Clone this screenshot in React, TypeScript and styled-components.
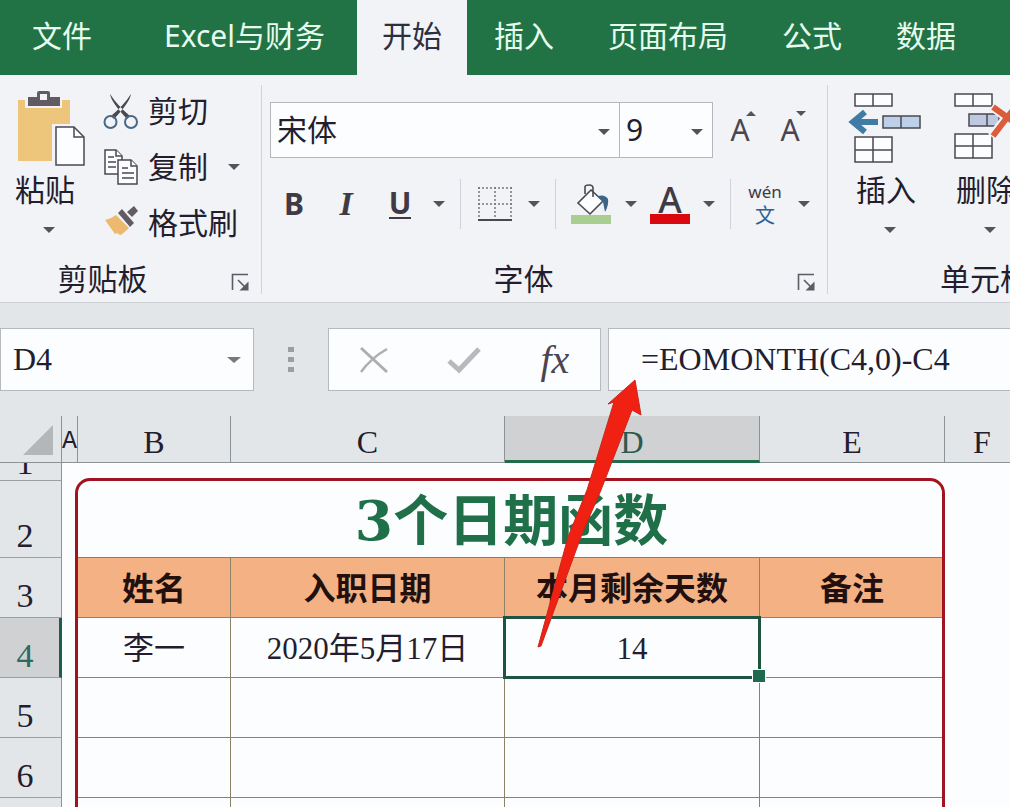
import React from "react";
import styled, { createGlobalStyle, css } from "styled-components";

const ui = `"Noto Sans", "Noto Sans CJK SC", sans-serif`;
const sheet = `"Liberation Serif", "Noto Sans CJK SC", serif`;

const GlobalStyle = createGlobalStyle`
  * { box-sizing: border-box; }
  body { margin: 0; background: #fcfdfe; overflow: hidden; }
  button, input, select { font: inherit; color: inherit; border: 0; padding: 0; margin: 0; background: none; }
`;

const Shell = styled.div`
  height: 100vh;
  display: flex;
  flex-direction: column;
  overflow: hidden;
  font-family: ${ui};
  font-size: 30px;
  line-height: 40px;
  color: #231d2e;
`;

const TabBar = styled.nav`
  flex: none;
  height: 75px;
  display: flex;
  overflow: hidden;
  background: #217345;
`;

const Tab = styled.button<{ $active?: boolean; $pad?: number; $gap?: number }>`
  flex: none;
  height: 75px;
  padding: 0 ${(p) => p.$pad ?? 27}px 4px;
  margin-right: ${(p) => p.$gap ?? 0}px;
  white-space: nowrap;
  color: #e6fbee;
  ${(p) => p.$active && css`background: #f1f3f6; color: #2a3040;`}
`;

const Ribbon = styled.section`
  flex: none;
  height: 228px;
  display: flex;
  overflow: hidden;
  background: #f1f3f6;
  border-bottom: 1px solid #cdd1d5;
`;

const Group = styled.div<{ $w?: number }>`
  flex: none;
  width: ${(p) => p.$w}px;
  padding: 15px 0 0 8px;
  display: flex;
  flex-direction: column;
`;

const GroupLine = styled.div`
  flex: none;
  width: 1px;
  margin: 10px 0 8px;
  background: #cfd3d8;
`;

const GroupBody = styled.div`
  height: 169px;
  display: flex;
`;

const GroupFooter = styled.div<{ $inset?: number }>`
  display: flex;
  align-items: center;
  justify-content: center;
  position: relative;
  height: 40px;
  padding-right: ${(p) => p.$inset ?? 0}px;
`;

const Launcher = styled.button`
  position: absolute;
  right: 10px;
  top: 14px;
  width: 20px;
  height: 20px;
  display: flex;
`;

const BigButton = styled.button<{ $w: number }>`
  flex: none;
  width: ${(p) => p.$w}px;
  height: 160px;
  display: flex;
  flex-direction: column;
  align-items: center;
  white-space: nowrap;
`;

const BigIcon = styled.span`
  height: 80px;
  display: flex;
`;

const CaretSlot = styled.span`
  height: 40px;
  padding-left: 8px;
  display: flex;
  align-items: center;
`;

const CommandList = styled.div`
  padding: 1px 0 0 21px;
  display: flex;
  flex-direction: column;
`;

const CommandRow = styled.div`
  height: 56px;
  display: flex;
  align-items: flex-start;
  gap: 13px;
`;

const Command = styled.button`
  display: flex;
  align-items: center;
  gap: 9px;
  height: 40px;
  white-space: nowrap;
`;

const CaretButton = styled.button`
  flex: none;
  width: 26px;
  height: 40px;
  display: flex;
  align-items: center;
  justify-content: center;
`;

const FontStack = styled.div`
  padding-top: 12px;
  display: flex;
  flex-direction: column;
`;

const FontRow = styled.div`
  height: 56px;
  display: flex;
  align-items: center;
`;

const SelectBox = styled.div<{ $w: number }>`
  position: relative;
  width: ${(p) => p.$w}px;
  height: 56px;
  margin-right: -1px;
  border: 1px solid #b4b8bc;
  background: #fcfdfe;
  display: flex;
  align-items: center;
  select {
    appearance: none;
    width: 100%;
    height: 54px;
    padding: 0 30px 0 6px;
    outline: none;
  }
  svg { position: absolute; right: 9px; top: 26px; pointer-events: none; }
`;

const SizeButton = styled.button`
  width: 50px;
  height: 50px;
  display: flex;
  align-items: center;
  justify-content: center;
  color: #4a4550;
  svg { align-self: flex-start; margin: 6px 0 0 -4px; }
`;

const SizeButtons = styled.div`
  display: flex;
  margin-left: 6px;
`;

const FormatRow = styled.div`
  height: 60px;
  margin-top: 16px;
  display: flex;
  align-items: center;
`;

const FormatButton = styled.button<{ $w?: number }>`
  flex: none;
  width: ${(p) => p.$w ?? 52}px;
  height: 52px;
  display: flex;
  flex-direction: column;
  align-items: center;
  justify-content: center;
  font-weight: 700;
  color: #403a44;
`;

const Italic = styled.i`
  font-family: "Liberation Serif", serif;
  font-size: 34px;
`;

const Underlined = styled.span`
  line-height: 28px;
  border-bottom: 2px solid #403a44;
`;

const FontColor = styled.span`
  height: 39px;
  width: 40px;
  line-height: 29px;
  font-size: 36px;
  font-weight: 500;
  border-bottom: 10px solid #d9090f;
`;

const Pinyin = styled.span`
  font-size: 17px;
  line-height: 24px;
  font-weight: 400;
`;

const PinyinChar = styled.span`
  height: 24px;
  font-size: 20px;
  line-height: 24px;
  font-weight: 400;
  color: #2f5f94;
`;

const Divider = styled.span`
  flex: none;
  width: 1px;
  height: 50px;
  margin: 0 8px;
  background: #cfd2d8;
`;

const FormulaBar = styled.section`
  flex: none;
  height: 113px;
  padding-top: 25px;
  display: flex;
  align-items: flex-start;
  background: #e3e6e9;
  font-family: ${sheet};
  font-size: 32px;
`;

const NameBox = styled.div`
  flex: none;
  width: 254px;
  height: 63px;
  padding: 0 6px 0 12px;
  display: flex;
  align-items: center;
  background: #fcfdfe;
  border: 1px solid #b6babe;
  input { flex: 1; min-width: 0; height: 50px; outline: none; }
`;

const Grip = styled.div`
  flex: none;
  width: 74px;
  height: 63px;
  display: flex;
  align-items: center;
  justify-content: center;
`;

const EntryTools = styled.div`
  flex: none;
  width: 273px;
  height: 63px;
  margin-right: 7px;
  display: flex;
  background: #fcfdfe;
  border: 1px solid #b6babe;
  button {
    flex: 1;
    display: flex;
    align-items: center;
    justify-content: center;
  }
`;

const Fx = styled.i`
  font-size: 40px;
  color: #4a4550;
`;

const FormulaInput = styled.input`
  && {
    flex: 1;
    min-width: 0;
    height: 63px;
    padding: 0 0 0 32px;
    background: #fcfdfe;
    border: 1px solid #b6babe;
    border-right: 0;
    outline: none;
  }
`;

const SheetArea = styled.main`
  flex: 1;
  min-height: 0;
  position: relative;
  overflow: hidden;
  background: #fcfdfe;
  font-family: ${sheet};
`;

const Grid = styled.table`
  width: 100%;
  table-layout: fixed;
  border-collapse: separate;
  border-spacing: 0;
  font-size: 31px;
  line-height: 36px;
`;

const ColHead = styled.th<{ $selected?: boolean; $narrow?: boolean }>`
  height: 47px;
  padding: 6px 0 0;
  font-weight: 400;
  font-size: 32px;
  background: #e3e6e9;
  border-right: 1px solid #8d9296;
  border-bottom: 1px solid #8d9296;
  &:last-child { border-right: 0; text-align: left; padding-left: 28px; }
  ${(p) => p.$narrow && css`
    font-family: "Liberation Mono", monospace;
    font-size: 25px;
  `}
  ${(p) => p.$selected && css`
    padding-top: 8px;
    background: #cfd1d3;
    color: #2d5a4a;
    border-bottom: 3px solid #1f6b4a;
  `}
`;

const Corner = styled.td`
  padding: 8px 8px 6px 0;
  background: #e3e6e9;
  border-right: 1px solid #8d9296;
  border-bottom: 1px solid #8d9296;
  svg { display: block; margin-left: auto; }
`;

const Row = styled.tr<{ $h: number }>`
  height: ${(p) => p.$h}px;
`;

const RowHead = styled.th<{ $selected?: boolean }>`
  padding: 0 11px 3px 0;
  vertical-align: bottom;
  font-weight: 400;
  font-size: 34px;
  background: #e3e6e9;
  border-right: 1px solid #8d9296;
  border-bottom: 1px solid #9a9fa3;
  ${(p) => p.$selected && css`
    padding-right: 9px;
    background: #cfd1d3;
    color: #2d6a62;
    border-right: 3px solid #1f5f48;
  `}
`;

const ClippedNumber = styled.div`
  height: 14px;
  overflow: hidden;
  display: flex;
  align-items: flex-end;
  justify-content: center;
  line-height: 28px;
`;

const Cell = styled.td`
  padding: 2px 0 0;
  text-align: center;
  border-right: 1px solid #8b8468;
  border-bottom: 1px solid #8b8468;
`;

const Blank = styled.td`
  padding: 0;
`;

const Title = styled.td`
  padding: 4px 0 0;
  text-align: center;
  font-family: "DejaVu Serif", "Noto Sans CJK SC", serif;
  font-size: 55px;
  line-height: 60px;
  font-weight: 700;
  color: #1f7048;
  border-bottom: 1px solid #8b8440;
`;

const HeadCell = styled(Cell)`
  background: #f4b183;
  font-size: 32px;
  font-weight: 700;
  color: #22100f;
`;

const SelectedCell = styled(Cell)`
  position: relative;
`;

const Selection = styled.span`
  position: absolute;
  inset: -2px;
  border: 3px solid #1f5540;
  &::after {
    content: "";
    position: absolute;
    right: -8px;
    bottom: -7px;
    width: 12px;
    height: 12px;
    background: #1d6a4c;
    border: 1px solid #fcfdfe;
  }
`;

const RedFrame = styled.div`
  position: absolute;
  left: 75px;
  top: 62px;
  width: 870px;
  height: 400px;
  border: 3px solid #a3131f;
  border-radius: 15px;
  pointer-events: none;
`;

const Pointer = styled.svg`
  position: absolute;
  left: 530px;
  top: 372px;
  pointer-events: none;
`;

const Caret = ({ w = 12, color = "#55535a" }: { w?: number; color?: string }) => (
  <svg width={w} height="6" viewBox="0 0 12 6" preserveAspectRatio="none" aria-hidden>
    <path d="M0 0H12L6 6Z" fill={color} />
  </svg>
);

const LaunchIcon = () => (
  <svg width="20" height="20" viewBox="0 0 20 20" fill="none" stroke="#5c5a62" strokeWidth="1.6">
    <path d="M1.5 17V1.5H17M7 7L14 14" />
    <path d="M17.5 8.5V17.5H8.5Z" fill="#5c5a62" stroke="none" />
  </svg>
);

const PasteIcon = () => (
  <svg width="82" height="78" viewBox="-12 0 82 78">
    <path d="M2 10H54V38H38V71H2Z" fill="#edc57b" />
    <path d="M9 6H46V18H9Z" fill="#f1f3f6" />
    <path d="M12 7H21V3Q21 1 23 1H32Q34 1 34 3V7H44V16H12ZM24 4V10H31V4Z" fill="#625b62" fillRule="evenodd" />
    <path d="M36 34H61L70 46V78H36Z" fill="#f1f3f6" />
    <path d="M40 37H58L68 47V75H40Z" fill="#fcfdfe" stroke="#4b4850" strokeWidth="1.5" />
    <path d="M58 37V47H68" fill="none" stroke="#4b4850" strokeWidth="1.5" />
  </svg>
);

const CutIcon = () => (
  <svg width="36" height="38" viewBox="0 0 36 38" fill="none">
    <path d="M7 2Q8 10 24 27L27 24Q14 13 7 2ZM28 2Q27 10 11 27L8 24Q21 13 28 2Z" fill="#4b4850" />
    <circle cx="7.5" cy="30" r="6" stroke="#4a6785" strokeWidth="2" />
    <circle cx="28" cy="30" r="6" stroke="#4a6785" strokeWidth="2" />
  </svg>
);

const CopyIcon = () => (
  <svg width="36" height="38" viewBox="0 0 36 38" fill="#fcfdfe" stroke="#4b4850" strokeWidth="1.5">
    <path d="M2 2H13L19 8V26H2Z" />
    <path d="M13 2V8H19M5 9H11M5 14H13M5 19H13" />
    <path d="M15 12H28L34 18V36H15Z" />
    <path d="M28 12V18H34M19 20H25M19 25H31M19 30H31" />
  </svg>
);

const BrushIcon = () => (
  <svg width="36" height="38" viewBox="0 0 36 38">
    <path d="M2 16Q8 15 13 11L26 24Q23 27 18 31Q16 31 14 29L12 30L2 16Z" fill="#edb96e" />
    <path d="M15 9L19 5L31 19L27 23Z" fill="#625b62" />
    <path d="M24 8L31 2L35 7L29 13Z" fill="#625b62" />
  </svg>
);

const BordersIcon = () => (
  <svg width="36" height="36" viewBox="0 0 36 36" fill="none">
    <path d="M1 2H35M1 18H35M2 1V33M18 1V33M34 1V33" stroke="#75757c" strokeWidth="1.5" strokeDasharray="2 2" />
    <path d="M1 34H35" stroke="#4b4850" strokeWidth="2" />
  </svg>
);

const FillIcon = () => (
  <svg width="40" height="40" viewBox="0 0 40 40" fill="none">
    <path d="M20 6L32 17L19 30L7 19Z" fill="#fcfdfe" stroke="#4b4850" strokeWidth="1.6" />
    <path d="M14 10V3Q14 1 18 1Q22 1 22 4V13" stroke="#4b4850" strokeWidth="1.6" />
    <path d="M27 12Q34 10 37 15Q38 21 34 28L32 18Z" fill="#3b6688" />
    <path d="M0 31H40V40H0Z" fill="#a9cf90" />
  </svg>
);

const InsertIcon = () => (
  <svg width="76" height="74" viewBox="0 0 76 74" fill="#fcfdfe" stroke="#4b4850" strokeWidth="1.5">
    <path d="M7 4H44V16H7ZM25 4V16M7 47H44V72H7ZM25 47V72M7 60H44" />
    <path d="M35 26H72V38H35ZM53 26V38" fill="#bdd0e8" />
    <path d="M30 32H6M17 22L5 32L17 42" fill="none" stroke="#3f7ba3" strokeWidth="6" />
  </svg>
);

const DeleteIcon = () => (
  <svg width="76" height="74" viewBox="0 0 76 74" fill="#fcfdfe" stroke="#4b4850" strokeWidth="1.5">
    <path d="M7 4H44V16H7ZM25 4V16M7 44H44V68H7ZM25 44V68M7 56H44" />
    <path d="M21 24H51V36H21ZM39 24V36" fill="#bdc9e0" />
    <path d="M44 16L74 38M44 47L68 16" fill="none" stroke="#f1f3f6" strokeWidth="10" />
    <path d="M45 17L74 38M45 46L68 16" fill="none" stroke="#dc5b3a" strokeWidth="6" />
  </svg>
);

const emptyRows = [5, 6, 7];

export default function App() {
  return (
    <Shell>
      <GlobalStyle />
      <TabBar>
        <Tab $pad={32} $gap={8}>文件</Tab>
        <Tab $pad={32}>Excel与财务</Tab>
        <Tab $active $pad={25}>开始</Tab>
        <Tab>插入</Tab>
        <Tab>页面布局</Tab>
        <Tab>公式</Tab>
        <Tab>数据</Tab>
      </TabBar>

      <Ribbon>
        <Group $w={261}>
          <GroupBody>
            <BigButton $w={74}>
              <BigIcon><PasteIcon /></BigIcon>
              <span>粘贴</span>
              <CaretSlot><Caret /></CaretSlot>
            </BigButton>
            <CommandList>
              <CommandRow><Command><CutIcon />剪切</Command></CommandRow>
              <CommandRow>
                <Command><CopyIcon />复制</Command>
                <CaretButton aria-label="复制选项"><Caret /></CaretButton>
              </CommandRow>
              <CommandRow><Command><BrushIcon />格式刷</Command></CommandRow>
            </CommandList>
          </GroupBody>
          <GroupFooter $inset={64}>
            剪贴板
            <Launcher aria-label="剪贴板设置"><LaunchIcon /></Launcher>
          </GroupFooter>
        </Group>
        <GroupLine />
        <Group $w={565}>
          <GroupBody>
            <FontStack>
              <FontRow>
                <SelectBox $w={350}>
                  <select aria-label="字体名称"><option>宋体</option></select>
                  <Caret />
                </SelectBox>
                <SelectBox $w={94}>
                  <select aria-label="字号"><option>9</option></select>
                  <Caret />
                </SelectBox>
                <SizeButtons>
                  <SizeButton aria-label="增大字号">
                    A<svg width="10" height="5" viewBox="0 0 10 5"><path d="M0 5L5 0L10 5Z" fill="#55535a" /></svg>
                  </SizeButton>
                  <SizeButton aria-label="减小字号">
                    A<svg width="10" height="5" viewBox="0 0 10 5"><path d="M0 0L5 5L10 0Z" fill="#55535a" /></svg>
                  </SizeButton>
                </SizeButtons>
              </FontRow>
              <FormatRow>
                <FormatButton $w={48}>B</FormatButton>
                <FormatButton $w={56}><Italic>I</Italic></FormatButton>
                <FormatButton><Underlined>U</Underlined></FormatButton>
                <CaretButton aria-label="下划线选项"><Caret /></CaretButton>
                <Divider />
                <FormatButton aria-label="边框"><BordersIcon /></FormatButton>
                <CaretButton aria-label="边框选项"><Caret /></CaretButton>
                <Divider />
                <FormatButton $w={54} aria-label="填充颜色"><FillIcon /></FormatButton>
                <CaretButton aria-label="填充选项"><Caret /></CaretButton>
                <FormatButton><FontColor>A</FontColor></FormatButton>
                <CaretButton aria-label="字体颜色选项"><Caret /></CaretButton>
                <Divider />
                <FormatButton><Pinyin>wén</Pinyin><PinyinChar>文</PinyinChar></FormatButton>
                <CaretButton aria-label="拼音选项"><Caret /></CaretButton>
              </FormatRow>
            </FontStack>
          </GroupBody>
          <GroupFooter $inset={50}>
            字体
            <Launcher aria-label="字体设置"><LaunchIcon /></Launcher>
          </GroupFooter>
        </Group>
        <GroupLine />
        <Group $w={306}>
          <GroupBody>
            <BigButton $w={100}>
              <BigIcon><InsertIcon /></BigIcon>
              <span>插入</span>
              <CaretSlot><Caret /></CaretSlot>
            </BigButton>
            <BigButton $w={100}>
              <BigIcon><DeleteIcon /></BigIcon>
              <span>删除</span>
              <CaretSlot><Caret /></CaretSlot>
            </BigButton>
          </GroupBody>
          <GroupFooter>单元格</GroupFooter>
        </Group>
      </Ribbon>

      <FormulaBar>
        <NameBox>
          <input aria-label="名称框" defaultValue="D4" />
          <CaretButton aria-label="名称列表"><Caret w={14} color="#77777c" /></CaretButton>
        </NameBox>
        <Grip>
          <svg width="6" height="28" viewBox="0 0 6 28" fill="#9b9ea2">
            <path d="M0 1H6V6H0ZM0 11H6V16H0ZM0 21H6V26H0Z" />
          </svg>
        </Grip>
        <EntryTools>
          <button aria-label="取消">
            <svg width="30" height="28" viewBox="0 0 30 28" fill="none" stroke="#aeaeb2">
              <path d="M2 2L28 26" strokeWidth="3" /><path d="M28 3Q12 12 2 26" strokeWidth="2.5" />
            </svg>
          </button>
          <button aria-label="输入">
            <svg width="34" height="28" viewBox="0 0 34 28" fill="none" stroke="#b9b9bd" strokeWidth="5">
              <path d="M2 15L12 24L32 3" />
            </svg>
          </button>
          <button aria-label="插入函数"><Fx>fx</Fx></button>
        </EntryTools>
        <FormulaInput aria-label="编辑栏" defaultValue="=EOMONTH(C4,0)-C4" />
      </FormulaBar>

      <SheetArea>
        <Grid>
          <colgroup>
            <col width="62" /><col width="16" /><col width="153" /><col width="274" />
            <col width="255" /><col width="185" /><col />
          </colgroup>
          <thead>
            <tr>
              <Corner><svg width="30" height="30" viewBox="0 0 30 30"><path d="M30 0V30H0Z" fill="#b4b7ba" /></svg></Corner>
              <ColHead $narrow>A</ColHead>
              <ColHead>B</ColHead>
              <ColHead>C</ColHead>
              <ColHead $selected>D</ColHead>
              <ColHead>E</ColHead>
              <ColHead>F</ColHead>
            </tr>
          </thead>
          <tbody>
            <Row $h={18}>
              <RowHead><ClippedNumber>1</ClippedNumber></RowHead>
              <Blank colSpan={6} />
            </Row>
            <Row $h={77}>
              <RowHead>2</RowHead>
              <Blank />
              <Title colSpan={4}>3个日期函数</Title>
              <Blank />
            </Row>
            <Row $h={60}>
              <RowHead>3</RowHead>
              <Blank />
              <HeadCell>姓名</HeadCell>
              <HeadCell>入职日期</HeadCell>
              <HeadCell>本月剩余天数</HeadCell>
              <HeadCell>备注</HeadCell>
              <Blank />
            </Row>
            <Row $h={60}>
              <RowHead $selected>4</RowHead>
              <Blank />
              <Cell>李一</Cell>
              <Cell>2020年5月17日</Cell>
              <SelectedCell>14<Selection /></SelectedCell>
              <Cell />
              <Blank />
            </Row>
            {emptyRows.map((n) => (
              <Row key={n} $h={60}>
                <RowHead>{n}</RowHead>
                <Blank />
                <Cell /><Cell /><Cell /><Cell />
                <Blank />
              </Row>
            ))}
          </tbody>
        </Grid>
        <RedFrame />
      </SheetArea>

      <Pointer width="120" height="280" viewBox="530 372 120 280" aria-hidden>
        <path d="M635 380L608 404L614 402L587 490L568 537L538 647L541 646L582 534L601 490L632 410L641 415Z" fill="#f02012" stroke="#c8281c" strokeWidth="1" />
      </Pointer>
    </Shell>
  );
}
